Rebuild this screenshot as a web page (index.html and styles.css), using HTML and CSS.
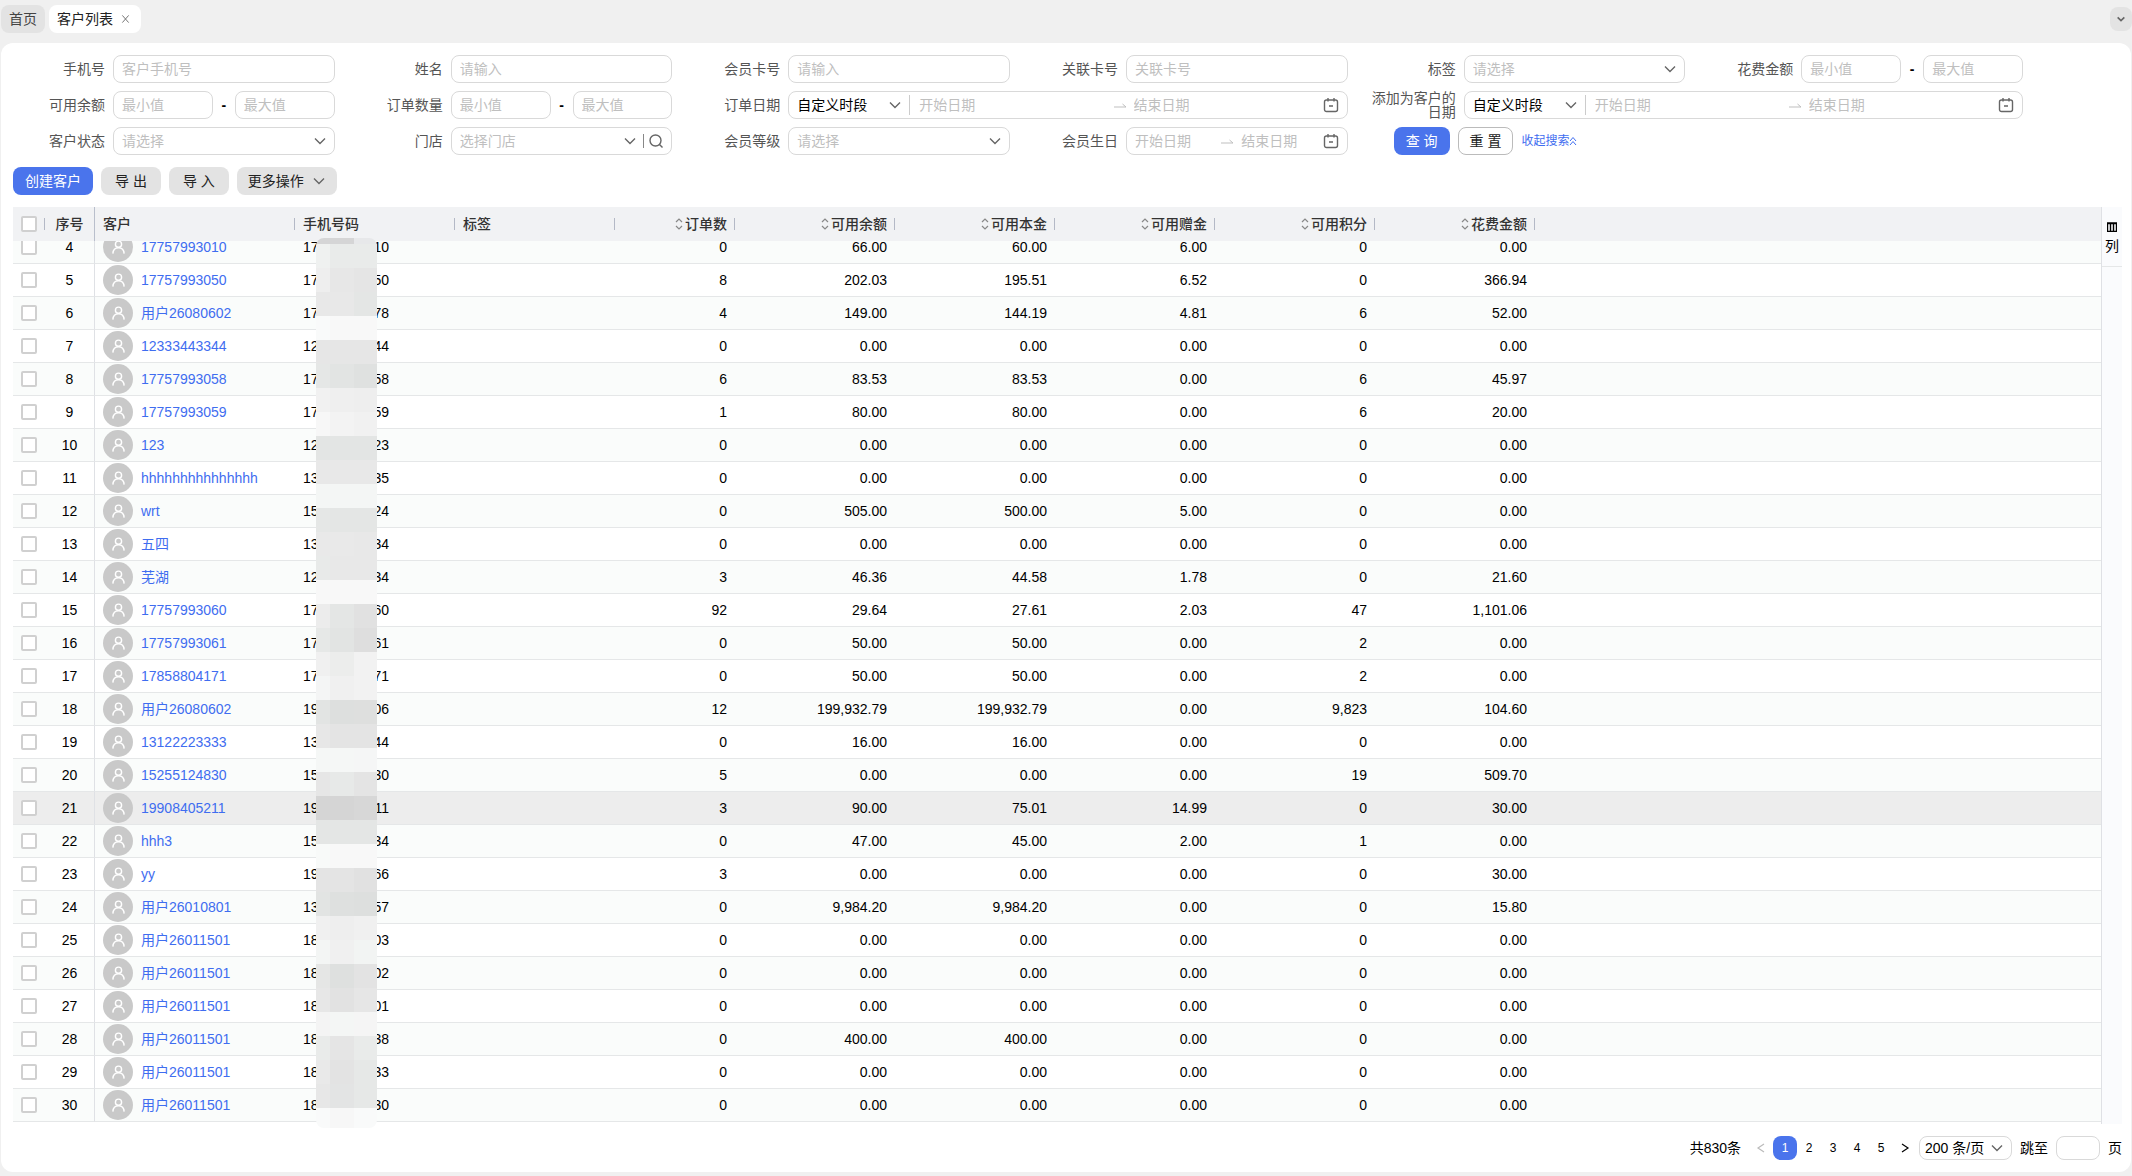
FILE: index.html
```html
<!DOCTYPE html>
<html lang="zh-CN">
<head>
    <meta charset="UTF-8">
    <meta name="viewport" content="width=device-width, initial-scale=1.0">
    <title>客户列表</title>
    <link rel="stylesheet" href="styles.css">
</head>
<body>

<svg class="sprite" aria-hidden="true">
    <symbol id="i-down" viewBox="0 0 12 12"><path d="M1 3.500 6 8.500l5-5" /></symbol>
    <symbol id="i-close" viewBox="0 0 10 12"><path d="M1.500 2l7 8M8.500 2l-7 8" /></symbol>
    <symbol id="i-search" viewBox="0 0 14 14"><circle cx="6.500" cy="6.500" r="5.500" /><path d="M10.500 10.500 13.500 13.500" /></symbol>
    <symbol id="i-arrow" viewBox="0 0 14 14"><path d="M1 9h12L9.500 6" /></symbol>
    <symbol id="i-calendar" viewBox="0 0 16 16"><rect x="1.500" y="3" width="13" height="11.500" rx="2" /><path d="M5 1v3.500M11 1v3.500M6 9h4" /></symbol>
    <symbol id="i-double-up" viewBox="0 0 8 12"><path d="M1 6l3-3.500L7 6M1 10l3-3.500L7 10" /></symbol>
    <symbol id="i-sort" viewBox="0 0 8 12"><path d="M1 4l3-3 3 3M1 8l3 3 3-3" /></symbol>
    <symbol id="i-user" viewBox="0 0 16 16"><circle cx="8" cy="4.500" r="3.300" /><path d="M2 14.500C2.200 10.500 4.800 8.200 8 8.200s5.800 2.300 6 6.300" /></symbol>
    <symbol id="i-prev" viewBox="0 0 12 12"><path d="M9 2 3 6l6 4" /></symbol>
    <symbol id="i-next" viewBox="0 0 12 12"><path d="M3 2l6 4-6 4" /></symbol>
    <symbol id="i-columns" viewBox="0 0 10 10"><path d="M.5 1.500h9v8h-9zM0 1h10M3.500 1v8.500M6.500 1v8.500" /></symbol>
</svg>

<nav class="tabs">
    <a class="tab" href="#home">首页</a>
    <a class="tab active" href="#customers">客户列表 <svg class="icon small"><use href="#i-close" /></svg></a>
    <button class="tabs-more" type="button" aria-label="更多标签"><svg class="icon tiny"><use href="#i-down" /></svg></button>
</nav>

<main class="panel">
    <form class="filters">
        <div class="field">
            <label for="phone">手机号</label>
            <input class="box" id="phone" type="text" placeholder="客户手机号">
        </div>
        <div class="field">
            <label for="name">姓名</label>
            <input class="box" id="name" type="text" placeholder="请输入">
        </div>
        <div class="field">
            <label for="card">会员卡号</label>
            <input class="box" id="card" type="text" placeholder="请输入">
        </div>
        <div class="field">
            <label for="linkedCard">关联卡号</label>
            <input class="box" id="linkedCard" type="text" placeholder="关联卡号">
        </div>
        <div class="field">
            <label for="tag">标签</label>
            <div class="box group">
                <select class="empty" id="tag"><option>请选择</option></select>
                <svg class="icon"><use href="#i-down" /></svg>
            </div>
        </div>
        <div class="field">
            <label for="spentMin">花费金额</label>
            <div class="range">
                <input class="box" id="spentMin" type="text" placeholder="最小值">
                <span>-</span>
                <input class="box" type="text" placeholder="最大值" aria-label="花费金额最大值">
            </div>
        </div>

        <div class="field">
            <label for="balanceMin">可用余额</label>
            <div class="range">
                <input class="box" id="balanceMin" type="text" placeholder="最小值">
                <span>-</span>
                <input class="box" type="text" placeholder="最大值" aria-label="可用余额最大值">
            </div>
        </div>
        <div class="field">
            <label for="ordersMin">订单数量</label>
            <div class="range">
                <input class="box" id="ordersMin" type="text" placeholder="最小值">
                <span>-</span>
                <input class="box" type="text" placeholder="最大值" aria-label="订单数量最大值">
            </div>
        </div>
        <div class="field wide">
            <label for="orderPeriod">订单日期</label>
            <div class="box group">
                <div class="period">
                    <select id="orderPeriod"><option>自定义时段</option></select>
                    <svg class="icon"><use href="#i-down" /></svg>
                </div>
                <input type="text" placeholder="开始日期" aria-label="订单开始日期">
                <svg class="icon arrow"><use href="#i-arrow" /></svg>
                <input type="text" placeholder="结束日期" aria-label="订单结束日期">
                <svg class="icon large"><use href="#i-calendar" /></svg>
            </div>
        </div>
        <div class="field wide">
            <label for="addedPeriod">添加为客户的日期</label>
            <div class="box group">
                <div class="period">
                    <select id="addedPeriod"><option>自定义时段</option></select>
                    <svg class="icon"><use href="#i-down" /></svg>
                </div>
                <input type="text" placeholder="开始日期" aria-label="添加开始日期">
                <svg class="icon arrow"><use href="#i-arrow" /></svg>
                <input type="text" placeholder="结束日期" aria-label="添加结束日期">
                <svg class="icon large"><use href="#i-calendar" /></svg>
            </div>
        </div>

        <div class="field">
            <label for="status">客户状态</label>
            <div class="box group">
                <select class="empty" id="status"><option>请选择</option></select>
                <svg class="icon"><use href="#i-down" /></svg>
            </div>
        </div>
        <div class="field">
            <label for="store">门店</label>
            <div class="box group">
                <select class="empty" id="store"><option>选择门店</option></select>
                <svg class="icon"><use href="#i-down" /></svg>
                <button class="search" type="button" aria-label="搜索门店"><svg class="icon"><use href="#i-search" /></svg></button>
            </div>
        </div>
        <div class="field">
            <label for="level">会员等级</label>
            <div class="box group">
                <select class="empty" id="level"><option>请选择</option></select>
                <svg class="icon"><use href="#i-down" /></svg>
            </div>
        </div>
        <div class="field">
            <label for="birthFrom">会员生日</label>
            <div class="box group">
                <input id="birthFrom" type="text" placeholder="开始日期">
                <svg class="icon arrow"><use href="#i-arrow" /></svg>
                <input type="text" placeholder="结束日期" aria-label="会员生日结束日期">
                <svg class="icon large"><use href="#i-calendar" /></svg>
            </div>
        </div>
        <div class="actions">
            <button class="btn primary" type="submit">查 询</button>
            <button class="btn outline" type="reset">重 置</button>
            <a href="#collapse">收起搜索<svg class="icon small"><use href="#i-double-up" /></svg></a>
        </div>
    </form>

    <div class="toolbar">
        <button class="btn primary" type="button">创建客户</button>
        <button class="btn" type="button">导 出</button>
        <button class="btn" type="button">导 入</button>
        <button class="btn more" type="button">更多操作 <svg class="icon"><use href="#i-down" /></svg></button>
    </div>

    <div class="grid">
        <div class="grid-scroll" id="gridScroll">
            <table>
                <colgroup>
                    <col class="c-check"><col class="c-no"><col class="c-customer"><col class="c-std"><col class="c-std">
                    <col class="c-orders"><col class="c-std"><col class="c-std"><col class="c-std"><col class="c-std"><col class="c-std"><col>
                </colgroup>
                <thead>
                    <tr>
                        <th class="split"><input type="checkbox" aria-label="全选"></th>
                        <th class="no pinned">序号</th>
                        <th class="split">客户</th>
                        <th class="split">手机号码</th>
                        <th class="split">标签</th>
                        <th class="num split"><svg class="sort"><use href="#i-sort" /></svg>订单数</th>
                        <th class="num split"><svg class="sort"><use href="#i-sort" /></svg>可用余额</th>
                        <th class="num split"><svg class="sort"><use href="#i-sort" /></svg>可用本金</th>
                        <th class="num split"><svg class="sort"><use href="#i-sort" /></svg>可用赠金</th>
                        <th class="num split"><svg class="sort"><use href="#i-sort" /></svg>可用积分</th>
                        <th class="num split"><svg class="sort"><use href="#i-sort" /></svg>花费金额</th>
                        <th></th>
                    </tr>
                </thead>
                <tbody id="rows"></tbody>
            </table>
        </div>
        <aside class="side">
            <button type="button"><svg class="columns"><use href="#i-columns" /></svg>列</button>
        </aside>
        <div class="mosaic" id="mosaic"></div>
    </div>

    <footer class="pager">
        <span class="total">共830条</span>
        <button class="page" type="button" aria-label="上一页" disabled><svg class="icon"><use href="#i-prev" /></svg></button>
        <button class="page current" type="button">1</button>
        <button class="page" type="button">2</button>
        <button class="page" type="button">3</button>
        <button class="page" type="button">4</button>
        <button class="page" type="button">5</button>
        <button class="page" type="button" aria-label="下一页"><svg class="icon"><use href="#i-next" /></svg></button>
        <div class="box group size">
            <select aria-label="每页条数"><option>200 条/页</option></select>
            <svg class="icon"><use href="#i-down" /></svg>
        </div>
        <label for="jump">跳至</label>
        <input class="box jump" id="jump" type="text">
        <span>页</span>
    </footer>
</main>

<script src="script.js"></script>
</body>
</html>
```

FILE: styles.css
```css
* {
    box-sizing: border-box;
}
body {
    margin: 0;
    height: 100vh;
    display: flex;
    flex-direction: column;
    background: #f0f0f0;
    color: #000;
    font: 14px/20px "Liberation Sans", "Noto Sans CJK SC", sans-serif;
}
input, select, button {
    font: inherit;
    color: inherit;
}
button {
    cursor: pointer;
}
a {
    color: #3f6df0;
    text-decoration: none;
}
.sprite {
    display: none;
}
.icon, .sort, .columns {
    flex: none;
    fill: none;
    stroke: currentColor;
}
.icon {
    width: 12px;
    height: 12px;
    color: #666;
    stroke-width: 1.4;
}
.icon.tiny {
    width: 8px;
    height: 8px;
    stroke-width: 2.4;
}
.icon.small {
    width: 8px;
    height: 12px;
    stroke-width: 1;
}
.icon.large {
    width: 16px;
    height: 16px;
}
.icon.arrow {
    width: 14px;
    height: 14px;
    margin: 0 7px 0 4px;
    color: #bfbfbf;
    stroke-width: 1;
}

/* tabs */
.tabs {
    display: flex;
    align-items: center;
    gap: 4px;
    height: 38px;
    padding-left: 1px;
    margin-bottom: 5px;
}
.tab {
    display: flex;
    align-items: center;
    gap: 8px;
    height: 28px;
    padding: 0 8px;
    border-radius: 8px;
    background: #e3e3e3;
    color: #444;
}
.tab.active {
    padding-right: 11px;
    background: #fff;
    color: #222;
}
.tab .icon {
    width: 9px;
}
.tabs-more {
    display: flex;
    align-items: center;
    justify-content: center;
    width: 22px;
    height: 24px;
    margin-left: auto;
    padding: 0;
    border: 0;
    border-radius: 8px;
    background: #e3e3e3;
}

.panel {
    flex: 1;
    min-height: 0;
    display: flex;
    flex-direction: column;
    margin: 0 1px 4px;
    padding: 12px 9px 12px 12px;
    border-radius: 12px;
    background: #fff;
}

/* filters */
.filters {
    display: grid;
    grid-template-columns: repeat(6, 1fr);
    gap: 8px 16px;
    margin-right: 99px;
}
.field {
    display: flex;
    align-items: center;
    gap: 8px;
    height: 28px;
    min-width: 0;
}
.field.wide {
    grid-column: span 2;
}
.field label {
    flex: none;
    width: 92px;
    line-height: 14px;
    text-align: right;
    color: #555;
}
.box {
    flex: 1;
    min-width: 0;
    height: 28px;
    padding: 0 8px;
    border: 1px solid #d9d9d9;
    border-radius: 8px;
    background: #fff;
}
.group {
    display: flex;
    align-items: center;
}
.group input, .group select {
    flex: 1;
    min-width: 0;
    padding: 0;
    border: 0;
    outline: 0;
    background: none;
    appearance: none;
}
::placeholder, select.empty {
    color: #bfbfbf;
    opacity: 1;
}
.range {
    flex: 1;
    min-width: 0;
    display: flex;
    align-items: center;
}
.range span {
    width: 22px;
    text-align: center;
    font-weight: bold;
}
.period {
    display: flex;
    align-items: center;
    width: 113px;
    margin-right: 9px;
    padding-right: 8px;
    border-right: 1px solid #ccc;
}
.search {
    display: flex;
    margin-left: 7px;
    padding: 0 0 0 5px;
    border: 0;
    border-left: 1px solid #888;
    background: none;
}
.search .icon {
    width: 14px;
    height: 14px;
}
.actions {
    display: flex;
    align-items: center;
    gap: 8px;
    padding-left: 30px;
}
.actions a {
    display: flex;
    align-items: center;
    flex: none;
    font-size: 12px;
}
.actions .icon {
    color: #3f6df0;
}

.btn {
    display: flex;
    align-items: center;
    flex: none;
    gap: 9px;
    height: 28px;
    padding: 0 14px;
    border: 0;
    border-radius: 8px;
    background: #e3e3e3;
    color: #222;
}
.btn.primary {
    background: #4a74ec;
    color: #fff;
    padding: 0 12px;
}
.btn.outline {
    padding: 0 11px;
    border: 1px solid #bbb;
    background: #fff;
}
.btn.more {
    padding: 0 12px 0 11px;
}
.toolbar {
    display: flex;
    gap: 8px;
    margin: 12px 0;
}

/* customer grid */
.grid {
    position: relative;
    flex: 1;
    min-height: 0;
    display: flex;
}
.grid-scroll {
    flex: 1;
    min-width: 0;
    padding-bottom: 2px;
    overflow: auto;
    scrollbar-width: none;
}
table {
    width: 100%;
    table-layout: fixed;
    border-spacing: 0;
}
.c-check { width: 32px; }
.c-no { width: 50px; }
.c-customer { width: 200px; }
.c-orders { width: 120px; }
.c-std { width: 160px; }
th, td {
    height: 33px;
    padding: 0 8px;
    text-align: left;
    white-space: nowrap;
}
th {
    position: sticky;
    top: 0;
    z-index: 1;
    height: 34px;
    background: #f1f2f4;
    color: #333;
    font-weight: 500;
}
.split {
    background: linear-gradient(#b4b9c6, #b4b9c6) right center / 1px 12px no-repeat #f1f2f4;
}
td {
    border-bottom: 1px solid #e5e7e8;
}
tbody tr:nth-child(odd) {
    background: #fafcfb;
}
tbody tr.hovered {
    background: #ededed;
}
.no {
    padding: 0;
    text-align: center;
}
.num {
    text-align: right;
}
.pinned {
    border-right: 1px solid #dfe1e5;
}
th.pinned {
    border-right-color: #b9bfcc;
}
input[type=checkbox] {
    display: block;
    width: 16px;
    height: 16px;
    margin: 0;
    border: 2px solid #d0d0d0;
    border-radius: 2px;
    background: #fff;
    appearance: none;
}
.sort {
    width: 8px;
    height: 12px;
    margin-right: 2px;
    color: #888;
    stroke-width: 1.2;
    vertical-align: -1px;
}
.customer {
    display: flex;
    align-items: center;
    gap: 8px;
    height: 30px;
}
.avatar {
    display: flex;
    align-items: center;
    justify-content: center;
    width: 30px;
    height: 30px;
    border-radius: 50%;
    background: #c9c9c9;
}
.avatar .icon {
    width: 15px;
    height: 15px;
    color: #fff;
    stroke-width: 1.5;
}
.phone {
    display: flex;
    justify-content: space-between;
    width: 86px;
}
.side {
    width: 21px;
    border-left: 1px solid #dfe1e5;
    background: #fafbfd;
}
.side button {
    display: flex;
    flex-direction: column;
    align-items: center;
    gap: 4px;
    width: 100%;
    height: 60px;
    padding: 15px 0 0;
    border: 0;
    border-bottom: 1px solid #e5e7e8;
    background: none;
}
.columns {
    width: 10px;
    height: 10px;
    stroke-width: 1.4;
}
/* covers the middle digits of the phone numbers */
.mosaic {
    position: absolute;
    z-index: 2;
    left: 303px;
    top: 31px;
    display: grid;
    grid-template-columns: 14px 24px 23px;
    grid-template-rows: 6px;
    grid-auto-rows: 24px;
    height: 890px;
    overflow: hidden;
    border-radius: 8px;
}

/* pagination */
.pager {
    display: flex;
    align-items: center;
    justify-content: flex-end;
    margin-top: 12px;
    height: 24px;
}
.total {
    margin-right: 8px;
}
.page {
    display: flex;
    align-items: center;
    justify-content: center;
    width: 24px;
    height: 24px;
    padding: 0;
    border: 0;
    border-radius: 8px;
    background: none;
    font-size: 12px;
}
.page .icon {
    color: #000;
    stroke-width: 1.2;
}
.page:disabled .icon {
    color: #bbb;
}
.page.current {
    background: #4a74ec;
    color: #fff;
}
.pager .box {
    flex: none;
    height: 24px;
}
.pager .size {
    width: 93px;
    margin: 0 8px 0 2px;
    padding: 0 8px 0 5px;
}
.pager .jump {
    width: 44px;
    margin: 0 8px;
}
```

FILE: script.js
```js
// no, customer, phone start, phone end, orders, balance, principal, bonus, points, spent
const customers = [
    [4, '17757993010', '17', '10', '0', '66.00', '60.00', '6.00', '0', '0.00'],
    [5, '17757993050', '17', '50', '8', '202.03', '195.51', '6.52', '0', '366.94'],
    [6, '用户26080602', '17', '78', '4', '149.00', '144.19', '4.81', '6', '52.00'],
    [7, '12333443344', '12', '44', '0', '0.00', '0.00', '0.00', '0', '0.00'],
    [8, '17757993058', '17', '58', '6', '83.53', '83.53', '0.00', '6', '45.97'],
    [9, '17757993059', '17', '59', '1', '80.00', '80.00', '0.00', '6', '20.00'],
    [10, '123', '12', '23', '0', '0.00', '0.00', '0.00', '0', '0.00'],
    [11, 'hhhhhhhhhhhhhhh', '13', '35', '0', '0.00', '0.00', '0.00', '0', '0.00'],
    [12, 'wrt', '15', '24', '0', '505.00', '500.00', '5.00', '0', '0.00'],
    [13, '五四', '13', '34', '0', '0.00', '0.00', '0.00', '0', '0.00'],
    [14, '芜湖', '12', '34', '3', '46.36', '44.58', '1.78', '0', '21.60'],
    [15, '17757993060', '17', '60', '92', '29.64', '27.61', '2.03', '47', '1,101.06'],
    [16, '17757993061', '17', '61', '0', '50.00', '50.00', '0.00', '2', '0.00'],
    [17, '17858804171', '17', '71', '0', '50.00', '50.00', '0.00', '2', '0.00'],
    [18, '用户26080602', '19', '06', '12', '199,932.79', '199,932.79', '0.00', '9,823', '104.60'],
    [19, '13122223333', '13', '44', '0', '16.00', '16.00', '0.00', '0', '0.00'],
    [20, '15255124830', '15', '30', '5', '0.00', '0.00', '0.00', '19', '509.70'],
    [21, '19908405211', '19', '11', '3', '90.00', '75.01', '14.99', '0', '30.00'],
    [22, 'hhh3', '15', '34', '0', '47.00', '45.00', '2.00', '1', '0.00'],
    [23, 'yy', '19', '66', '3', '0.00', '0.00', '0.00', '0', '30.00'],
    [24, '用户26010801', '13', '57', '0', '9,984.20', '9,984.20', '0.00', '0', '15.80'],
    [25, '用户26011501', '18', '03', '0', '0.00', '0.00', '0.00', '0', '0.00'],
    [26, '用户26011501', '18', '02', '0', '0.00', '0.00', '0.00', '0', '0.00'],
    [27, '用户26011501', '18', '01', '0', '0.00', '0.00', '0.00', '0', '0.00'],
    [28, '用户26011501', '18', '38', '0', '400.00', '400.00', '0.00', '0', '0.00'],
    [29, '用户26011501', '18', '33', '0', '0.00', '0.00', '0.00', '0', '0.00'],
    [30, '用户26011501', '18', '30', '0', '0.00', '0.00', '0.00', '0', '0.00']
];
const hoveredNo = 21;

document.getElementById('rows').innerHTML = customers.map(([no, name, start, end, ...amounts]) => `
    <tr class="${no === hoveredNo ? 'hovered' : ''}">
        <td><input type="checkbox" aria-label="选择 ${no}"></td>
        <td class="no pinned">${no}</td>
        <td><div class="customer"><span class="avatar"><svg class="icon"><use href="#i-user" /></svg></span><a href="#customer-${no}">${name}</a></div></td>
        <td><div class="phone"><span>${start}</span><span>${end}</span></div></td>
        <td></td>
        ${amounts.map(amount => `<td class="num">${amount}</td>`).join('')}
        <td></td>
    </tr>`).join('');

// three blocks per line, from top to bottom
const blocks = `
    d5d5d6 d5d5d6 e7e8ea  eff1f0 e9ebea e9ebea  eeeeee e7e7e7 e5e5e5  e8e8e8 e8e8e8 e4e6e5
    f9fafa f8f8f8 f8f8f8  e6e6e6 e6e6e6 e6e6e6  e5e7e6 e2e4e3 dfe1e0  f1f1f1 efefef eeeeee
    f7f7f7 f3f3f3 f1f1f1  e3e5e4 e3e5e4 e3e5e4  e8e8e8 e8e8e8 e8e8e8  f4f6f5 f4f6f5 f4f6f5
    e5e7e6 e4e6e5 e4e6e5  e9e9e9 e9e9e9 e8e8e8  e8eae9 e8e8e8 e8e8e8  f8f8f8 f8f8f8 f8f8f8
    ececec e4e6e5 e1e1e1  e6e8e7 e2e4e3 dedede  f0f0f0 ecedec f2f2f2  f4f5f5 f0f0f0 f2f2f2
    e2e4e3 dddfde dedfde  e7e7e7 e4e4e4 e4e4e4  f5f7f6 f5f7f6 f5f6f6  e6e6e6 e7e9e8 e4e4e4
    d5d5d5 d5d5d5 d7d7d7  e4e6e5 e4e6e5 e4e6e5  f8faf9 f8f8f8 f8f8f8  e4e4e4 e4e4e4 e1e1e1
    e2e4e3 dee0df dddfde  f0f0f0 eeeeee f0f0f0  f3f5f4 f0f0f0 f2f4f3  e5e6e5 dee0df e3e3e3
    e7e7e7 e2e2e2 e6e6e6  f4f4f4 f4f6f5 f5f5f5  e9ebea e5e5e5 e9ebea  e9e9e9 e3e3e3 e6e8e7
    e7e7e7 e3e4e4 e6e8e7  f9fafa f7f7f7 f9fafa`;
document.getElementById('mosaic').innerHTML = blocks.trim().split(/\s+/)
    .map(color => `<span style="background:#${color}"></span>`).join('');

// the list opens scrolled to its last row
const gridScroll = document.getElementById('gridScroll');
gridScroll.scrollTop = gridScroll.scrollHeight;
```
